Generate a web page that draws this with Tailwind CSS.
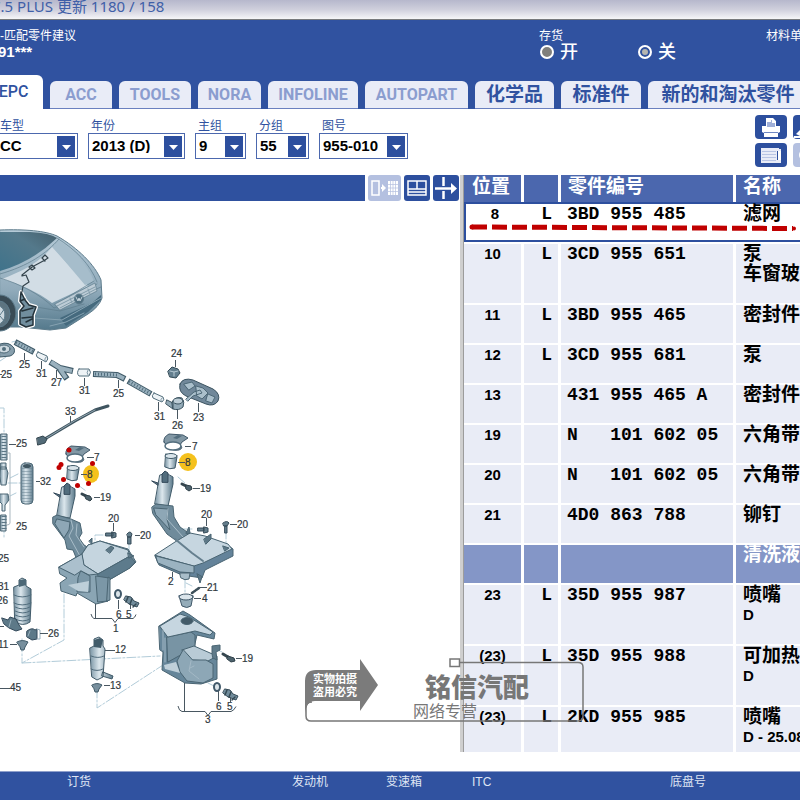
<!DOCTYPE html>
<html lang="zh-CN">
<head>
    <meta charset="UTF-8">
    <meta name="viewport" content="width=device-width, initial-scale=1.0">
    <title>EPC 955-010</title>
    <script src="https://cdn.jsdelivr.net/npm/@tailwindcss/browser@4"></script>
</head>
<body class="relative flex min-h-screen flex-col overflow-x-hidden bg-white font-['Liberation_Sans','Noto_Sans_CJK_SC',sans-serif] text-[15px] text-black">

<!-- Title bar -->
<div class="h-5 shrink-0 overflow-hidden border-b border-[#77797c] bg-linear-to-b from-[#b6b7cc] via-[#cfcfdc] to-[#f6f6f8] font-['Noto_Sans','Noto_Sans_CJK_SC',sans-serif]">
    <p class="-ml-2 text-[15px] leading-3 whitespace-nowrap text-[#3f5fa8]">7.5 PLUS 更新 1180 / 158</p>
</div>

<!-- Header -->
<header class="flex h-[89px] shrink-0 flex-col justify-between overflow-hidden bg-[#3052a0] text-white">
    <div class="flex pt-2 whitespace-nowrap">
        <div class="w-[539px] shrink-0">
            <p class="text-xs leading-4">-匹配零件建议</p>
            <p class="-ml-0.5 text-[15px] leading-4 font-bold">91***</p>
        </div>
        <fieldset class="w-[227px] shrink-0">
            <legend class="text-xs leading-4">存货</legend>
            <div class="flex gap-[60px] text-lg leading-4 font-medium">
                <label class="flex items-center gap-1.5">
                    <input type="radio" name="stock" class="ml-px size-[14px] appearance-none rounded-full border-2 border-white bg-[#807f7c]">开
                </label>
                <label class="flex items-center gap-1.5">
                    <input type="radio" name="stock" checked class="size-[14px] appearance-none rounded-full border-2 border-white bg-[#b5b5b0] ring-2 ring-[#3052a0] ring-inset">关
                </label>
            </div>
        </fieldset>
        <p class="text-xs leading-4">材料单</p>
    </div>

    <nav class="flex shrink-0 items-end gap-[7px] font-['Roboto','Noto_Sans_CJK_SC',sans-serif] text-base font-bold whitespace-nowrap text-[#8b9dcf]">
        <button class="h-[34px] w-[43px] shrink-0 overflow-hidden rounded-tr-md bg-white font-medium text-[#3052a0]"><span class="-ml-4">EPC</span></button>
        <button class="h-7 w-[62px] shrink-0 rounded-t-md border-b border-[#6a80bf] bg-[#e9ecf7]">ACC</button>
        <button class="h-7 w-[72px] shrink-0 rounded-t-md border-b border-[#6a80bf] bg-[#e9ecf7]">TOOLS</button>
        <button class="h-7 w-[63px] shrink-0 rounded-t-md border-b border-[#6a80bf] bg-[#e9ecf7]">NORA</button>
        <button class="h-7 w-[90px] shrink-0 rounded-t-md border-b border-[#6a80bf] bg-[#e9ecf7]">INFOLINE</button>
        <button class="h-7 w-[103px] shrink-0 rounded-t-md border-b border-[#6a80bf] bg-[#e9ecf7]">AUTOPART</button>
        <button class="h-7 w-[79px] shrink-0 rounded-t-md border-b border-[#6a80bf] bg-[#e9ecf7] text-[19px] leading-6 text-[#3052a0]">化学品</button>
        <button class="h-7 w-[80px] shrink-0 rounded-t-md border-b border-[#6a80bf] bg-[#e9ecf7] text-[19px] leading-6 text-[#3052a0]">标准件</button>
        <button class="h-7 w-[160px] shrink-0 rounded-tl-md border-b border-[#6a80bf] bg-[#e9ecf7] text-[19px] leading-6 text-[#3052a0]">新的和淘汰零件</button>
    </nav>
</header>

<!-- Vehicle selection -->
<div class="flex h-[66px] shrink-0 items-start gap-2.5 overflow-hidden pt-1.5">
    <label class="w-[78px] shrink-0 pt-1 text-xs leading-[14px] text-[#3052a0]">车型
        <span class="relative block">
            <select class="h-[26px] w-full appearance-none border border-l-0 border-[#4c68ae] bg-white text-[15px] font-bold text-black"><option>CC</option></select>
            <svg class="pointer-events-none absolute top-[3px] right-[3px]" width="18" height="21"><path fill="#2d4f9e" d="M0 0h18v21H0z"/><path fill="#fff" d="M5 9h9l-4.500 5z"/></svg>
        </span>
    </label>
    <label class="w-[97px] shrink-0 pt-1 text-xs leading-[14px] text-[#3052a0]"><span class="pl-[3px]">年份</span>
        <span class="relative block">
            <select class="h-[26px] w-full appearance-none border border-[#4c68ae] bg-white pl-[3px] text-[15px] font-bold text-black"><option>2013 (D)</option></select>
            <svg class="pointer-events-none absolute top-[3px] right-[3px]" width="18" height="21"><path fill="#2d4f9e" d="M0 0h18v21H0z"/><path fill="#fff" d="M5 9h9l-4.500 5z"/></svg>
        </span>
    </label>
    <label class="w-[51px] shrink-0 pt-1 text-xs leading-[14px] text-[#3052a0]"><span class="pl-[3px]">主组</span>
        <span class="relative block">
            <select class="h-[26px] w-full appearance-none border border-[#4c68ae] bg-white pl-[3px] text-[15px] font-bold text-black"><option>9</option></select>
            <svg class="pointer-events-none absolute top-[3px] right-[3px]" width="18" height="21"><path fill="#2d4f9e" d="M0 0h18v21H0z"/><path fill="#fff" d="M5 9h9l-4.500 5z"/></svg>
        </span>
    </label>
    <label class="w-[53px] shrink-0 pt-1 text-xs leading-[14px] text-[#3052a0]"><span class="pl-[3px]">分组</span>
        <span class="relative block">
            <select class="h-[26px] w-full appearance-none border border-[#4c68ae] bg-white pl-[3px] text-[15px] font-bold text-black"><option>55</option></select>
            <svg class="pointer-events-none absolute top-[3px] right-[3px]" width="18" height="21"><path fill="#2d4f9e" d="M0 0h18v21H0z"/><path fill="#fff" d="M5 9h9l-4.500 5z"/></svg>
        </span>
    </label>
    <label class="w-[89px] shrink-0 pt-1 text-xs leading-[14px] text-[#3052a0]"><span class="pl-[3px]">图号</span>
        <span class="relative block">
            <select class="h-[26px] w-full appearance-none border border-[#4c68ae] bg-white pl-[3px] text-[15px] font-bold text-black"><option>955-010</option></select>
            <svg class="pointer-events-none absolute top-[3px] right-[3px]" width="18" height="21"><path fill="#2d4f9e" d="M0 0h18v21H0z"/><path fill="#fff" d="M5 9h9l-4.500 5z"/></svg>
        </span>
    </label>

    <div class="ml-auto w-[45px] overflow-hidden">
        <div class="grid w-[70px] grid-cols-2 gap-x-1.5 gap-y-1">
            <button aria-label="打印" class="flex h-6 items-center justify-center rounded bg-[#2d4f9e]">
                <svg width="20" height="19"><path fill="#fff" d="M5 0h7l3 3v5h4v6l-2 1v4H3v-4l-2-1V8h4z"/><path fill="#9fafd8" d="M6 4h4v-2h1v3h3v4H6z"/><path fill="#6f87c2" d="M3 14h14v1H3z"/></svg>
            </button>
            <button aria-label="编辑" class="flex h-6 items-end rounded bg-[#2d4f9e]">
                <svg width="16" height="12"><path fill="#fff" d="M3 7l5-5 4 4-5 3zM1 9h14v2H1z"/></svg>
            </button>
            <button aria-label="列表" class="flex h-6 items-center justify-center rounded bg-[#2d4f9e]">
                <svg width="20" height="15"><path fill="#e9ecf7" d="M0 0h20v15H0z"/><path stroke="#b9c5e4" d="M1 3.500h14M1 6.500h14M1 9.500h14M1 12.500h14"/><path fill="#2d4f9e" d="M16 3h1v9h-1zM18 0h2v1h-2z"/><path fill="#fff" d="M17 3h3v9h-3z"/></svg>
            </button>
            <button aria-label="查看" class="flex h-6 items-center rounded bg-[#b4c0e0] pl-1.5">
                <svg width="16" height="14"><circle cx="6" cy="7" r="5" fill="none" stroke="#fff" stroke-width="2"/></svg>
            </button>
        </div>
    </div>
</div>

<main class="flex shrink-0">
    <!-- Illustration pane -->
    <section class="flex min-w-0 flex-1 flex-col overflow-hidden">
        <div class="flex h-[27px] gap-[3px] pr-[3px]">
            <div class="mb-px min-w-0 flex-1 bg-[#2f519f]"></div>
            <button aria-label="列表视图" class="h-[26px] w-[33px] rounded-[3px] bg-[#b4c0e0]">
                <svg width="33" height="26"><path fill="none" stroke="#fff" stroke-width="1.500" d="M4 6h7v14H4z"/><path fill="#fff" d="M13 12h1V9l4 4-4 4v-3h-1zM20 6h10v14H20z"/><path stroke="#b4c0e0" stroke-width=".7" d="M22.500 6v14M25 6v14M27.500 6v14M20 9.500h10M20 13h10M20 16.500h10"/></svg>
            </button>
            <button aria-label="分割视图" class="h-[26px] w-[26px] rounded-[3px] bg-[#2d4f9e]">
                <svg width="26" height="26"><path fill="none" stroke="#fff" stroke-width="1.500" d="M4 6h18v14H4zM4 14h18M13 6v8M4 17h18" /></svg>
            </button>
            <button aria-label="移动分隔" class="-mr-0.5 h-[26px] w-[26px] rounded-[3px] bg-[#2d4f9e]">
                <svg width="26" height="26"><path fill="none" stroke="#fff" stroke-width="2.500" d="M10.500 2v9M10.500 16v8M2 13.500h17"/><path fill="#fff" d="M18 8l6 5.500-6 5.500z"/></svg>
            </button>
        </div>

        <svg class="shrink-0" width="460" height="550" viewBox="0 202 460 550" font-family="Liberation Sans, sans-serif" font-size="10" fill="none" stroke-linejoin="round" stroke-linecap="round">
            <defs>
                <linearGradient id="tube" x1="0" x2="1"><stop offset="0" stop-color="#7b96a6"/><stop offset=".4" stop-color="#dce7ed"/><stop offset="1" stop-color="#5d7b8c"/></linearGradient>
                <linearGradient id="glass" x1="0" x2="1" y1="1" y2="0"><stop offset="0" stop-color="#3f738b"/><stop offset=".6" stop-color="#54798b"/><stop offset="1" stop-color="#46606d"/></linearGradient>
                <linearGradient id="paint" x1="0" x2="0" y1="0" y2="1"><stop offset="0" stop-color="#b6cbd8"/><stop offset=".6" stop-color="#91abbb"/><stop offset="1" stop-color="#54798c"/></linearGradient>
            </defs>

            <!-- car -->
            <g stroke="#5e7c8c">
                <path fill="url(#paint)" d="M0 230C25 229 46 231 57 236C78 248 95 265 101 280L102 298Q99 307 88 314L66 328L50 330L20 327L0 327Z"/>
                <path fill="url(#glass)" stroke="none" d="M0 232L30 232Q50 233 57 238Q32 262 0 271Z"/>
                <path fill="#d2dde5" stroke="none" d="M2 279C26 270 42 260 52 247L88 286L52 303C38 292 20 284 2 279Z"/>
                <path fill="#a6bdcb" stroke="none" d="M52 246L58 240C76 252 88 266 94 281L85 285Z"/>
                <path stroke-width=".7" d="M0 274C28 266 46 254 59 239M0 278C20 284 40 294 54 308L101 287M94 281L58 303M97 284L58 306M57 238C76 250 90 264 97 282M30 306L60 311L84 304"/>
                <path fill="#bdccd6" stroke-width=".7" d="M55 304L95 283L97 291L60 310Z"/>
                <path stroke="#839dab" d="M57 306L95 287M60 308L96 289M70 298l2 5M88 289l2 5"/>
                <path fill="#456a7e" stroke="none" d="M60 318L92 303L101 295L101 300L88 312L66 326Z"/>
                <path stroke="#86a2b1" d="M34 318L62 320L101 298M50 326L66 322L84 313"/>
                <ellipse cx="79" cy="299" rx="4.500" ry="5" fill="#4f6f80"/>
                <path stroke="#c7d5de" d="M76 297l2 4 1-3 1 3 2-4"/>
                <ellipse cx="0" cy="313" rx="16" ry="18" fill="#394b55"/>
                <ellipse cx="-1" cy="314" rx="11" ry="13" fill="#5d7480"/>
                <ellipse cx="-2" cy="315" rx="7" ry="9" fill="#cdd9df"/>
                <path d="M0 315L5 308M0 316L5 322"/>
            </g>
            <path stroke="#fff" stroke-width="4" d="M21 292l-1 9 4 5-4 5v13l6 3 7-2v-10l3-8-7-2-4-5z"/>
            <path fill="#718e9e" stroke="#25333b" stroke-width="1.500" d="M21 292l-1 9 4 5-4 5v13l6 3 7-2v-10l3-8-7-2-4-5zM22 311l11-3M22 318l10-1M26 322l6-3M20 301l5-2"/>
            <path stroke="#33434c" stroke-width="1.200" d="M22 292l1-6 6-4-3-7-4 1v-1l10-8 13-7 3-2-3-3-3 3 3 3M29 267l3-2 3 3-3 2z"/>

            <!-- dash-dot guide lines -->
            <g stroke="#b2ccd9" stroke-dasharray="9 2 2 2">
                <path d="M0 408L4 408V434M4 524V538M0 361l6-4M12 342l4-1M10 478l8-4M8 483h13M10 496l6-3M64 594V640L22 663V638M22 663L160 656M97 689V708L180 654M78 485l8 6M95 551V535h11M129 543v14M168 529h25M226 530v18M185 564v29M178 477l8 7M214 648l8 4M208 683l8 4M186 583l6 3"/>
            </g>

            <!-- hose run at the top -->
            <g stroke="#405b69" stroke-width="6" stroke-linecap="butt">
                <path d="M15 342L34 352M50 362L60 368L73 371M59 368L67 379M93 374L117 375L125 379M128 381L151 394"/>
            </g>
            <g stroke="#9ab1be" stroke-width="4" stroke-linecap="butt">
                <path d="M16 342.500L33 351.500M51 362L60 368L72 371M60 369L66 378M94 374L117 375L124 378.500M129 381.500L150 393.500"/>
            </g>
            <path stroke="#526e7d" stroke-width="3" stroke-dasharray="1 2" stroke-linecap="butt" d="M16 342.500L33 351.500M95 374L117 375M129 381.500L150 393.500"/>
            <g fill="#eef3f6" stroke="#536e7c">
                <path d="M38 352l9 4q2 3-1 6l-9-5q-2-2 1-5zM79 369h10q3 3 0 7H79q-3-3 0-7zM154 393l9 4q2 3-1 5l-9-4q-2-2 1-5z"/>
            </g>
            <path stroke="#7f98a6" d="M46 357q-2 2-1 4M88 370q-2 3 0 5M162 398q-2 2-1 3"/>
            <path fill="#93aab7" stroke="#3b5360" d="M167 400l6 3v6l-7-5zM172 402q4-6 10-4 3 4 1 9-4 4-10 2z"/>
            <ellipse cx="178" cy="401" rx="5" ry="3" fill="#bdcdd6" stroke="#3b5360"/>
            <path fill="#71889a" stroke="#3b5360" d="M180 384q3-7 13-4l20 9q8 5 5 12-4 6-12 3l-20-8q-8-4-6-12z"/>
            <path fill="#aabfcb" stroke="#4d6877" d="M184 384l8-2 3 4-6 4zM196 386l7 2 5 5-6 6-5-3zM186 399l8-7 6-2 2 3-9 3-5 5zM208 394l7 3-3 6-6-2z"/>
            <path fill="#627e8e" stroke="#324a56" d="M168 371l4-4 6 2 2 4-4 5-6-1z"/>
            <path stroke="#b5c8d2" d="M170 371l4 1 4-1M174 372v4"/>
            <path fill="#879fad" stroke="#405b69" d="M0 344q9-3 14 4 2 6-4 8L0 357z"/>
            <ellipse cx="4" cy="349" rx="6" ry="4" fill="#ccd8df" stroke="#4d6877"/>
            <circle cx="4" cy="349" r="2" fill="#526e7d"/>

            <!-- cable tie -->
            <path stroke="#3f5560" stroke-width="3" d="M43 440L75 421L95 410L108 406"/>
            <path stroke="#93a7b2" d="M45 439L76 420L95 410"/>
            <path fill="#536b78" stroke="#33454e" d="M37 438l6-2 4 3-2 4-7 2z"/>

            <!-- left hose stack -->
            <g fill="url(#tube)" stroke="#4c6775">
                <path d="M1 434h6v26H1zM1 463h5v6H1zM1 467h5l2 6-2 12H1l-1-8zM0 494h8l1 6-4 5v6H2v-7l-2-2zM1 515h5v16H1z"/>
                <rect x="21" y="463" width="12" height="41" rx="4"/>
            </g>
            <path stroke="#5b7685" stroke-width="5" stroke-dasharray="1 2" stroke-linecap="butt" d="M4 436v23M4 516v14"/>
            <path stroke="#60798a" stroke-width="10" stroke-dasharray="1 2" stroke-linecap="butt" opacity=".45" d="M27 468v34"/>
            <ellipse cx="27" cy="466" rx="4" ry="2" fill="#405661"/>
            <path stroke="#a9b7bf" d="M7 453h3v70q0 2-3 2"/>

            <!-- filler neck, strainer and cap: left and right -->
            <g id="neck">
                <path fill="#8298a5" stroke="#41596a" d="M66 454q-1-5 5-8l14 1 5 3-6 4-2 3q4 3-1 5-9 2-15-8z"/>
                <ellipse cx="75" cy="458" rx="8" ry="4" fill="#fff" stroke="#526d7d" stroke-width="1.500"/>
                <path fill="#526d7d" d="M75 450l5-3 4 1-5 3z"/>
                <path fill="url(#tube)" stroke="#405a69" d="M68 466l11 3-2 11q-5 2-10-1z"/>
                <ellipse cx="73" cy="468" rx="6" ry="2.500" fill="#d9e4ea" stroke="#405a69"/>
                <path fill="url(#tube)" stroke="#405a69" d="M62 487q6-3 13 2v7l-5 22-13-2z"/>
                <path fill="#526d7d" stroke="#33495a" d="M64 494v-8l3-3 3 2v9zM54 493l6 2v2z"/>
            </g>
            <use href="#neck" x="98" y="-12"/>
            <path stroke="#35464f" stroke-width="3" d="M82 494l4 2M182 484l4 2"/>
            <path fill="#4d626d" stroke="#2e3f48" d="M85 495l5 1 2 3-2 2-4-2zM186 485l5 1 1 3-3 2-3-2z"/>
            <ellipse cx="91" cy="474" rx="8" ry="9" fill="#f5c11d"/>
            <circle cx="188" cy="462" r="9" fill="#f5c11d"/>

            <!-- tank 1 -->
            <g stroke="#4a6573">
                <path fill="#6f8b9b" d="M53 517L57 515L71 519L80 523L82 533L79 538L84 545L89 548L84 558L77 560L73 550L67 549L65 540L53 524Z"/>
                <path fill="#8ea7b6" d="M57 519l13 3-1 8-5 8-9-14z"/>
                <path stroke="#a9bdc9" d="M71 520l2 8-4 8 11 20M77 524l-1 11 8 12"/>
                <path fill="#8aa5b4" d="M59 567L82 554L88 545L100 541L128 549L136 562L131 567L109 580L108 601L96 604L77 593L76 596L61 591L60 583L67 578L60 574Z"/>
                <path fill="#c5d5df" d="M82 554L88 545L100 541L128 550L130 556L98 574L84 565Z"/>
                <path fill="#abc0cd" d="M59 567L82 554L84 565L98 574L89 575L81 571L75 575Z"/>
                <path fill="#5d7b8c" d="M98 574L130 556L135 562L130 568L109 580L99 582Z"/>
                <path fill="#7b97a7" d="M81 571L90 576L90 592L77 592L78 578ZM96 576L109 578L108 601L98 602Z"/>
                <path fill="#bdcfd9" stroke="none" d="M68 585L89 581L88 592L78 591Z"/>
                <path fill="#5d7887" d="M106 550l5-4 3 2-4 5zM89 541l3-3v6zM128 553l6 3-5 2z"/>
                <path fill="#7d98a7" d="M108 579v-2l2 1v22l-3 1z"/>
            </g>

            <!-- tank 2 -->
            <g stroke="#4a6573">
                <path fill="#6f8b9b" d="M152 507L156 504L173 506L174 517L180 527L190 534L186 541L178 542L167 534L153 514Z"/>
                <path fill="#8ea7b6" d="M154 508l14 1-1 10 3 11-14-15z"/>
                <path stroke="#a9bdc9" d="M168 509l-1 10 16 18"/>
                <path fill="#64839a" d="M155 556L159 565L182 575L202 578L205 570L233 556L233 549L226 544L200 560L190 563Z"/>
                <path fill="#c6d6e0" d="M155 555L175 542L190 533L205 536L228 544L232 549L203 563L194 566Z"/>
                <path fill="#9bb3c1" d="M156 556L194 566L194 573L180 572L158 563Z"/>
                <path stroke-width="2" stroke="#657f8e" d="M175 539L192 553L203 561"/>
                <path fill="#5d7887" d="M204 539l7-5v5l-5 5zM186 533l3-6 1 6zM197 574l3 9 2-6zM223 546l6 2-4 3z"/>
                <path fill="#a8bdc9" d="M180 573h10l-1 6q-4 2-8-1z"/>
            </g>
            <g fill="#637d8b" stroke="#354b58">
                <path d="M106 533h7v3h-7zM112 532l4 1v4l-4 1zM127 534q3-4 5 0l-1 3h-3zM128 537h3v7h-3zM198 528h6v3h-6zM204 527l4 1v4l-4 1zM223 523q4-3 6 0l-2 3h-3zM225 526h2v7h-2z"/>
            </g>
            <path stroke="#3d505a" stroke-width="2.500" stroke-dasharray="1.500 1" d="M192 593l7-5"/>

            <!-- grommet 4 -->
            <path fill="#94acb9" stroke="#41596a" d="M179 596l3 10q5 3 9 0l2-10z"/>
            <ellipse cx="186" cy="597" rx="7" ry="3" fill="#dbe5eb" stroke="#41596a"/>

            <!-- tank 3 -->
            <g stroke="#4a6573">
                <path fill="#66869a" d="M159 626L183 611L190 615L215 633L214 639L197 635L194 648L217 656V679L201 684L185 683L162 670L163 652L160 650Z"/>
                <path fill="#7894a4" d="M167 637L191 632L195 635V647L168 662Z"/>
                <path fill="#c6d6e0" d="M160 626L180 614L189 617L213 632L210 635L195 631L168 637Z"/>
                <ellipse cx="187" cy="621" rx="6" ry="3.500" fill="#425a68"/>
                <path fill="#b9cbd6" d="M182 650L194 646L217 656L208 661L192 660Z"/>
                <path fill="#8da7b6" d="M183 650L177 661L180 672L187 681L203 683L213 678V664L206 660L193 660Z"/>
                <path fill="#bfd0da" stroke="none" d="M164 665L176 662L180 673L165 669Z"/>
                <path stroke="#a4b9c6" d="M163 630v20M165 638v24M191 661l-2 10 10 8M190 668l4-2"/>
                <path fill="#607b8a" d="M212 653v-7l8-1v5l-4 2 1 8-4-2z"/>
            </g>
            <path stroke="#35464f" stroke-width="3" d="M223 654l5 3"/>
            <path fill="#4d626d" stroke="#2e3f48" d="M228 656l6 2 1 3-4 1-4-3z"/>

            <!-- sensor plugs 5 and 6 -->
            <g id="plug">
                <ellipse cx="118" cy="594" rx="3" ry="4" fill="#dce5ea" stroke="#41596a" stroke-width="2"/>
                <path fill="#728d9c" stroke="#354b58" d="M126 596l5 1 3 4 5 2-2 4-5-2-3-1-5-4z"/>
                <path stroke="#344953" stroke-width="1.500" d="M128 597l-2 5M132 599l-2 5M136 604l-3 3"/>
            </g>
            <use href="#plug" x="99" y="93"/>

            <!-- pumps -->
            <path fill="url(#tube)" stroke="#405a69" d="M14 587l5-2v-5l3-2 4 2v6l5 3v15l-1 18q-7 5-15 0z"/>
            <path fill="#4c6877" d="M19 580l7-1v6l-7 2z"/>
            <path stroke="#526d7d" d="M14 595q8 4 17 0M14 603q8 4 17 0M15 607q8 4 15 0M15 611q8 4 15 0M15 615q8 4 15 0M15 619q8 4 15 0"/>
            <path fill="#5d7988" stroke="#33495a" d="M2 618l6 2 2-3 6 2 3 6 3 4-6 2-7-3-5-4zM27 631q5-4 8-1l2-1v10l-5 1-5-3z"/>
            <path stroke="#9bb2bf" d="M11 620l-2 7M30 631l-2 5M37 629l3 1v9h-3"/>
            <path fill="url(#tube)" stroke="#405a69" d="M90 648l4-2v-7l5-2 4 3v6l2 3-2 28-6 3-5-3zM103 672l10 4-1 3-10-3z"/>
            <path fill="#425c6a" d="M94 640l6-2 3 2-2 8-7-1z"/>
            <path stroke="#526d7d" d="M91 656q7 3 13 0M91 669q6 3 12 0"/>
            <g fill="#778f9d" stroke="#3f5967">
                <path d="M17 642q5-3 11 0l-3 5-1 3h-3l-1-3zM92 685q5-3 10 0l-3 4-1 3h-3l-1-3z"/>
            </g>

            <!-- leader lines -->
            <g stroke="#495761" stroke-linecap="butt">
                <path d="M24.500 353v7M41.500 361v8M56.500 370v8M84.500 378v8M118.500 380v8M175.500 360v7M158.500 402v9M177.500 410v9M198.500 403v9M70.500 416v6"/>
                <path d="M0 374.500h2M9 444.500h7M36 481.500h4M87 457.500h7M81 474.500h6M94 497.500h6M113.500 523v8M135 535.500h5M185 446.500h6M178 462.500h7M193 488.500h7M206.500 518v8M230 524.500h7M172.500 572v5M200 587.500h7M194 598.500h7M236 658.500h6M40 633.500h8M10 644.500h7M105 650.500h10M104 685.500h6M0 688.500h10M0 626.500h4"/>
                <path d="M118.500 600v9M130.500 605v4M95.500 604v14M218.500 691v10M230.500 697v5M184.500 683v29"/>
                <path d="M91 614q1 4 3 4.500h18l3 4 3-4h15q2-1 3-4M178 706q1 5 4 5.500h23l3 4 3-4h20q3-1 5-5"/>
            </g>

            <!-- position numbers -->
            <g fill="#30383d" stroke="#30383d" stroke-width=".2">
                <text x="19" y="368">25</text><text x="36" y="377">31</text><text x="51" y="386">27</text><text x="1" y="378">25</text>
                <text x="79" y="394">31</text><text x="113" y="397">25</text><text x="171" y="357">24</text><text x="154" y="420">31</text>
                <text x="172" y="429">26</text><text x="193" y="421">23</text><text x="65" y="415">33</text><text x="16" y="447">25</text>
                <text x="40" y="485">32</text><text x="94" y="461">7</text><text x="87" y="478">8</text><text x="100" y="501">19</text>
                <text x="16" y="530">25</text><text x="108" y="522">20</text><text x="140" y="539">20</text><text x="-2" y="562">25</text>
                <text x="-2" y="590">31</text><text x="-3" y="604">26</text><text x="48" y="637">26</text><text x="-2" y="648">11</text>
                <text x="115" y="653">12</text><text x="110" y="689">13</text><text x="10" y="691">45</text><text x="116" y="618">6</text>
                <text x="126" y="618">5</text><text x="113" y="632">1</text><text x="192" y="450">7</text><text x="185" y="466">8</text>
                <text x="200" y="492">19</text><text x="201" y="518">20</text><text x="237" y="528">20</text><text x="168" y="585">2</text>
                <text x="207" y="591">21</text><text x="202" y="602">4</text><text x="242" y="662">19</text><text x="216" y="710">6</text>
                <text x="227" y="710">5</text><text x="205" y="723">3</text>
            </g>

            <!-- red marker dots -->
            <g fill="#c00000">
                <circle cx="69" cy="450" r="2.500"/><circle cx="61" cy="464.500" r="2.500"/><circle cx="59" cy="467.500" r="2.500"/><circle cx="92.500" cy="463.500" r="2.500"/>
                <circle cx="63.500" cy="479.500" r="2.500"/><circle cx="77.500" cy="485.500" r="2.500"/><circle cx="88.500" cy="483.500" r="2.500"/>
            </g>
        </svg>
    </section>

    <div class="w-1 shrink-0 border-r border-[#9c9c9c] bg-[#cfcfcf]"></div>

    <!-- Parts list -->
    <section class="w-[42%] shrink-0 overflow-hidden">
        <table class="w-full table-fixed border-separate border-spacing-0 leading-5 font-bold whitespace-nowrap [&_td]:border-t-2 [&_td]:border-r-3 [&_td]:border-white [&_td]:p-0 [&_td]:align-top [&_td:nth-child(1)]:text-center [&_td:nth-child(2)]:pr-1.5 [&_td:nth-child(2)]:text-right [&_td:nth-child(2)]:font-['Liberation_Mono',monospace] [&_td:nth-child(2)]:text-lg [&_td:nth-child(2)]:leading-5 [&_td:nth-child(3)]:pl-1.5 [&_td:nth-child(3)]:font-['Liberation_Mono',monospace] [&_td:nth-child(3)]:text-lg [&_td:nth-child(3)]:leading-5 [&_td:nth-child(3)]:whitespace-pre [&_td:nth-child(4)]:border-r-0 [&_td:nth-child(4)]:pl-[7px]">
            <colgroup><col class="w-[60px]"><col class="w-[37px]"><col class="w-[175px]"><col></colgroup>
            <thead>
                <tr class="h-[27px] bg-[#4b67ae] text-left text-[19px] leading-6 text-white">
                    <th class="border-r-3 border-white p-0 pl-2 align-top">位置</th>
                    <th class="border-r-3 border-white p-0"></th>
                    <th class="border-r-3 border-white p-0 pl-[7px] align-top">零件编号</th>
                    <th class="p-0 pl-[7px] align-top">名称</th>
                </tr>
            </thead>
            <tbody class="bg-[#e9ecf6]">
                <tr class="h-10 bg-white [&>td]:border-y-2! [&>td]:border-r-0! [&>td]:border-[#2d4f9e]! [&>td:first-child]:border-l-2"><td>8</td><td class="pr-[9px]!">L</td><td>3BD 955 485</td><td class="text-[19px] leading-5">滤网</td></tr>
                <tr class="h-[61px]"><td>10</td><td>L</td><td>3CD 955 651</td><td class="text-[19px] leading-5">泵<br>车窗玻</td></tr>
                <tr class="h-10"><td>11</td><td>L</td><td>3BD 955 465</td><td class="text-[19px] leading-5">密封件</td></tr>
                <tr class="h-10"><td>12</td><td>L</td><td>3CD 955 681</td><td class="text-[19px] leading-5">泵</td></tr>
                <tr class="h-10"><td>13</td><td></td><td>431 955 465 A</td><td class="text-[19px] leading-5">密封件</td></tr>
                <tr class="h-10"><td>19</td><td></td><td>N   101 602 05</td><td class="text-[19px] leading-5">六角带</td></tr>
                <tr class="h-10"><td>20</td><td></td><td>N   101 602 05</td><td class="text-[19px] leading-5">六角带</td></tr>
                <tr class="h-10"><td>21</td><td></td><td>4D0 863 788</td><td class="text-[19px] leading-5">铆钉</td></tr>
                <tr class="h-10 bg-[#8496c7] text-white"><td></td><td></td><td></td><td class="text-[19px] leading-5">清洗液</td></tr>
                <tr class="h-[61px]"><td>23</td><td>L</td><td>35D 955 987</td><td><span class="block text-[19px] leading-5">喷嘴</span>D</td></tr>
                <tr class="h-[61px]"><td>(23)</td><td>L</td><td>35D 955 988</td><td><span class="block text-[19px] leading-5">可加热</span>D</td></tr>
                <tr class="h-[47px]"><td>(23)</td><td>L</td><td>2KD 955 985</td><td><span class="block text-[19px] leading-5">喷嘴</span>D - 25.08</td></tr>
            </tbody>
        </table>
    </section>
</main>

<!-- Status bar -->
<footer class="mt-[19px] flex min-h-[29px] flex-1 border-t border-[#8fa0cc] bg-[#3052a0] pt-0.5 pl-[67px] text-xs leading-4 whitespace-nowrap text-[#dfe5f4]">
    <span class="w-[225px]">订货</span>
    <span class="w-[94px]">发动机</span>
    <span class="w-[86px]">变速箱</span>
    <span class="w-[198px]">ITC</span>
    <span>底盘号</span>
</footer>

<!-- Underline of the selected part and shop watermark -->
<svg class="pointer-events-none absolute top-0 left-0" width="800" height="760" fill="none">
    <path stroke="#c00000" stroke-width="5" stroke-dasharray="15 5" d="M472 227L793 228.500"/>
    <circle cx="472" cy="227" r="2.500" fill="#c00000"/>
    <circle cx="794" cy="228.500" r="2" fill="#c00000"/>
    <path stroke="#777" stroke-width="1.500" d="M460 662.500H578Q583 662.500 583 667V716Q583 721 578 721H311Q306 721 306 716V708Q306 702 312 702M450 659h9.500v7.500H450z"/>
    <path fill="#7b7b7b" d="M305 714V681Q305 670 316 670H360V659L378 685L360 711V701H315Q306 701 305 714Z"/>
    <g font-family="Noto Sans CJK SC, sans-serif">
        <g fill="#fff" font-size="11" font-weight="700"><text x="313" y="683">实物拍摄</text><text x="313" y="696">盗用必究</text></g>
        <text x="425" y="697" fill="#777" font-size="26" font-weight="900">铭信汽配</text>
        <text x="413" y="717" fill="#777" font-size="16">网络专营</text>
    </g>
</svg>

</body>
</html>
